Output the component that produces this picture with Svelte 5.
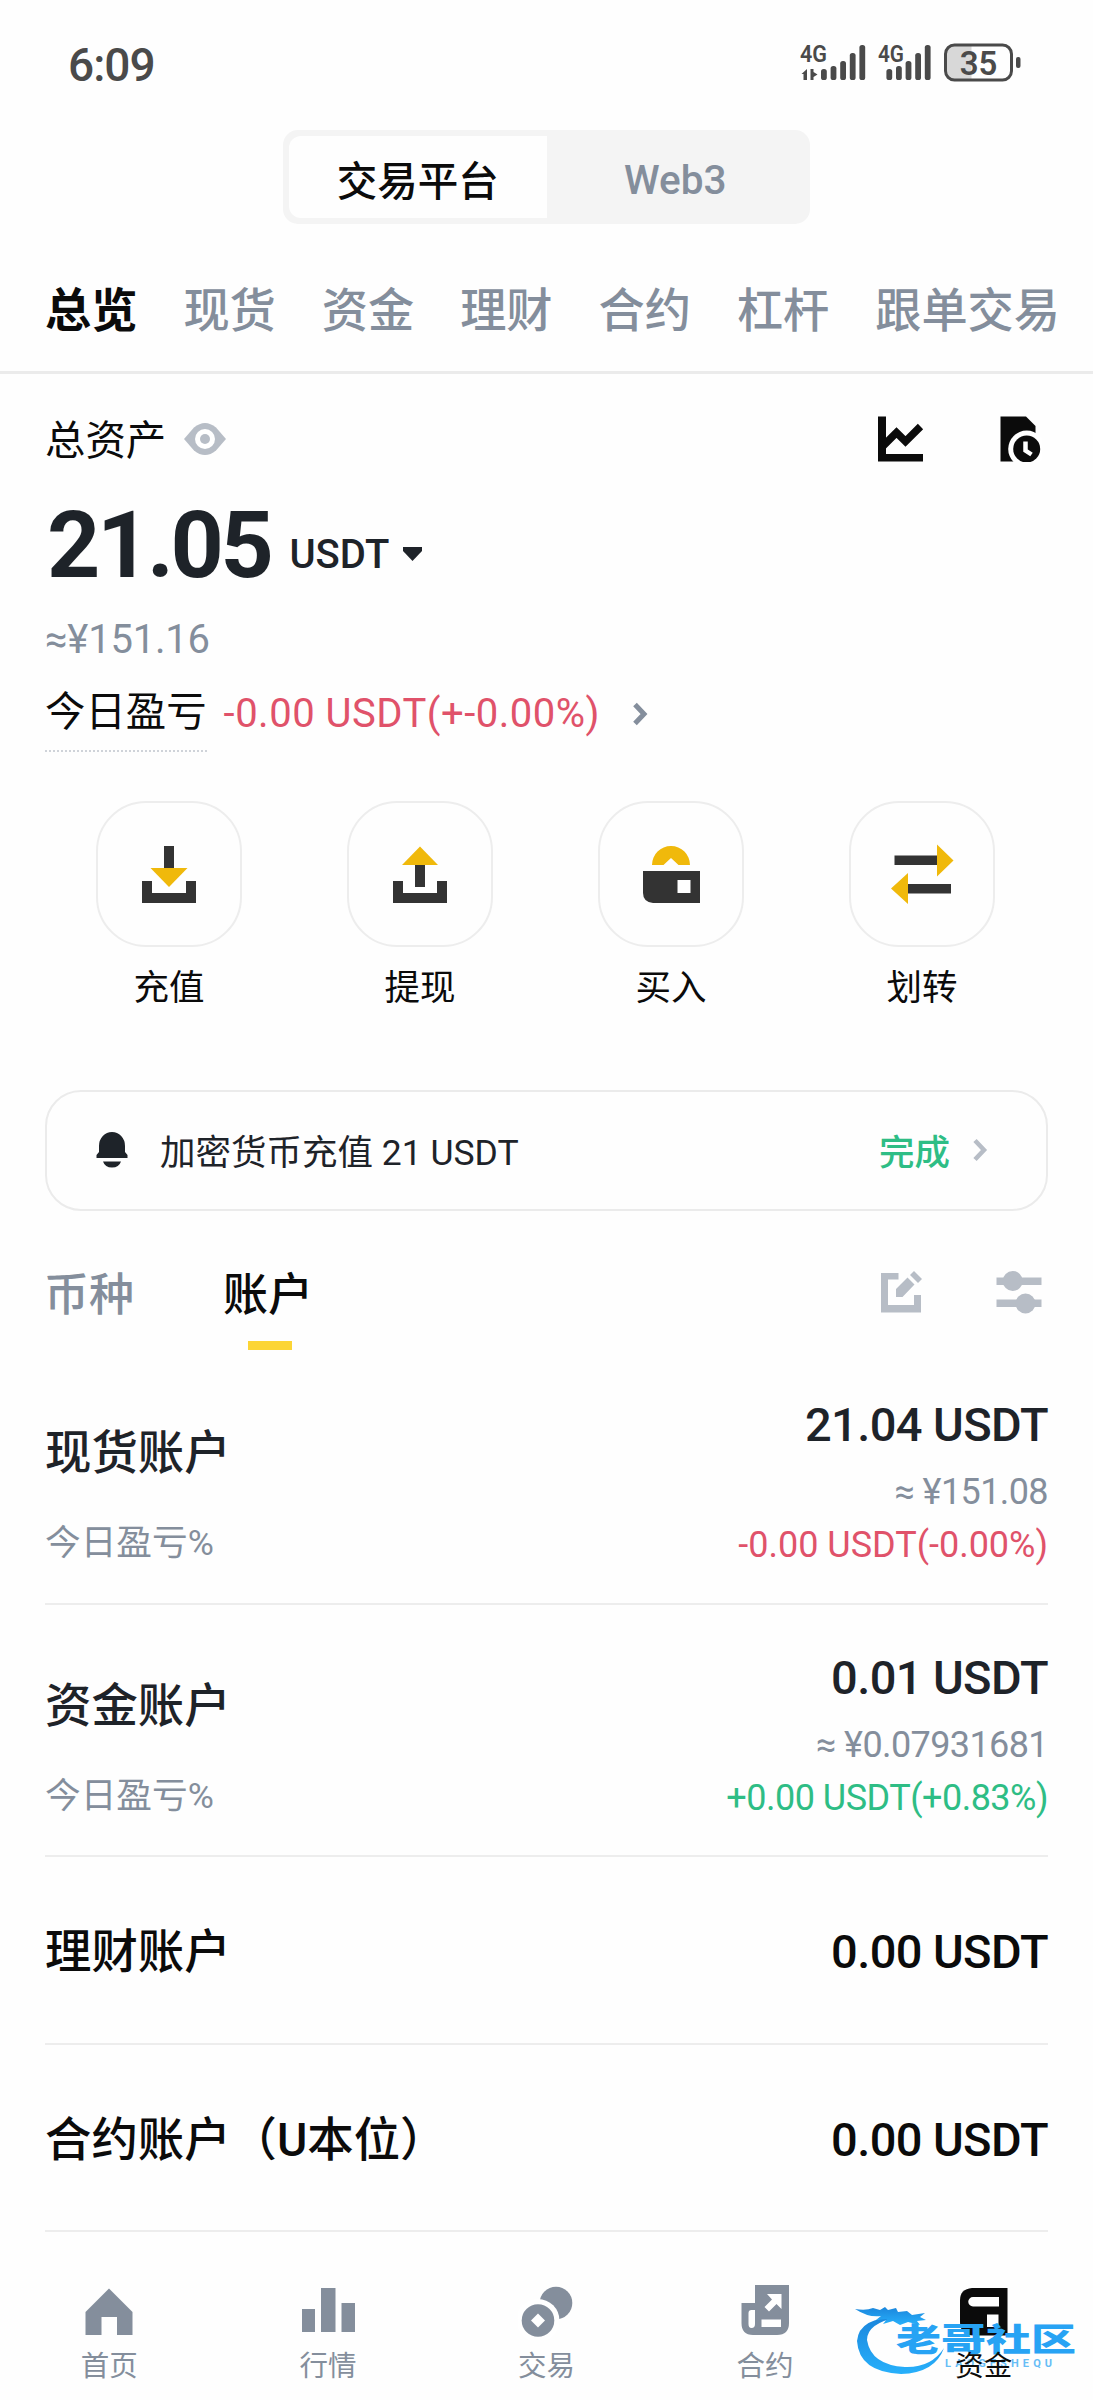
<script>
  let activeTab = $state('总览');
  let activeList = $state('账户');
  let activeNav = $state('资金');

  const tabs = ['总览', '现货', '资金', '理财', '合约', '杠杆', '跟单交易'];

  const actions = [
    { id: 'deposit', label: '充值' },
    { id: 'withdraw', label: '提现' },
    { id: 'buy', label: '买入' },
    { id: 'transfer', label: '划转' },
  ];

  const accounts = [
    { name: '现货账户', amount: '21.04 USDT', fiat: '≈ ¥151.08', pnl: '-0.00 USDT(-0.00%)', trend: 'down' },
    { name: '资金账户', amount: '0.01 USDT', fiat: '≈ ¥0.07931681', pnl: '+0.00 USDT(+0.83%)', trend: 'up' },
    { name: '理财账户', amount: '0.00 USDT' },
    { name: '合约账户（U本位）', amount: '0.00 USDT' },
  ];

  const navItems = [
    { id: 'home', label: '首页' },
    { id: 'markets', label: '行情' },
    { id: 'trade', label: '交易' },
    { id: 'futures', label: '合约' },
    { id: 'wallet', label: '资金' },
  ];

  // [x, top] of each signal bar
  const bars = [[0, 24], [9.6, 21], [19.2, 16], [28.8, 8], [38.4, 0]];
</script>

<div class="app">
  <div class="status-bar">
    <span class="clock">6:09</span>
    <svg class="status-icons" width="222" height="44" viewBox="800 40 222 44">
      <g fill="#4a4a4a">
        <text x="800" y="62" font-size="24" textLength="27" lengthAdjust="spacingAndGlyphs">4G</text>
        <text x="878" y="62" font-size="24" textLength="26" lengthAdjust="spacingAndGlyphs">4G</text>
        <path d="M807 69v11h-3.500v-6h-2zM810.500 69v11h3v-3l4-2.500-4-2.500v-3z" />
        {#each bars as [x, top]}
          <rect x={821 + x} y={45 + top} width="5.8" height={35 - top} rx="2.6" />
          <rect x={886.4 + x} y={45 + top} width="5.8" height={35 - top} rx="2.6" />
        {/each}
        <rect x="1016" y="57" width="4.5" height="11" rx="2" />
      </g>
      <path d="M954 45h17.500v35h-17.500q-8 0-8-8v-19q0-8 8-8z" fill="#d8d8d8" />
      <rect x="945.500" y="45" width="66" height="35" rx="9" fill="none" stroke="#4a4a4a" stroke-width="3" />
      <text class="battery" x="978.500" y="75" font-size="33" text-anchor="middle" fill="#4a4a4a">35</text>
    </svg>
  </div>

  <div class="switch">
    <button class="switch-item on">交易平台</button>
    <button class="switch-item">Web3</button>
  </div>

  <nav class="tabs">
    {#each tabs as tab}
      <button class="tab" class:active={activeTab === tab} onclick={() => (activeTab = tab)}>{tab}</button>
    {/each}
  </nav>

  <section class="summary">
    <div class="summary-head">
      <span class="total-label">总资产</span>
      <svg class="eye" width="44" height="34" viewBox="0 0 44 34">
        <path d="M1 17L11 5.500Q22-3.500 33 5.500L43 17 33 28.500Q22 37.500 11 28.500z" fill="#b7bdc6" />
        <circle cx="22" cy="17" r="10" fill="#fff" />
        <circle cx="22" cy="17" r="5" fill="#b7bdc6" />
      </svg>
      <span class="spacer"></span>
      <svg width="46" height="46" viewBox="878 416 46 46">
        <path d="M878 416.500h8v37.500h37v7.500h-45z" fill="#0b0b0b" />
        <path d="M883 446l13.500-13.500 9 9 15-15" fill="none" stroke="#0b0b0b" stroke-width="7.500" />
      </svg>
      <svg class="history" width="42" height="46" viewBox="1000 416 42 46">
        <path d="M1000.500 416.500h25.500l9.500 9.500v35.500h-35z" fill="#0b0b0b" />
        <circle cx="1026.700" cy="449" r="18.500" fill="#fff" />
        <circle cx="1026.700" cy="449" r="13.500" fill="#0b0b0b" />
        <path d="M1025.500 441.500v9l6 4" fill="none" stroke="#fff" stroke-width="4.500" />
      </svg>
    </div>

    <div class="balance">
      <span class="balance-value">21.05</span>
      <span class="balance-unit">USDT</span>
      <svg width="20" height="14" viewBox="0 0 20 14"><path d="M0 0h19v4l-9.500 10L0 4z" fill="#1e2329" /></svg>
    </div>

    <div class="fiat">≈¥151.16</div>

    <div class="pnl">
      <span class="pnl-label">今日盈亏</span>
      <span class="pnl-value">-0.00 USDT(+-0.00%)</span>
      <svg width="16" height="24" viewBox="0 0 16 24"><path d="M3 2.500l9 9.500-9 9.500" fill="none" stroke="#848e9c" stroke-width="5" /></svg>
    </div>
  </section>

  <section class="actions">
    {#each actions as { id, label }}
      <button class="action">
        <span class="action-box">
          <svg width="64" height="64" viewBox="0 0 64 64">
            {#if id === 'deposit'}
              <path d="M27 4h10v22H27zM5 39h10v12h34V39h10v22H5z" fill="#333" />
              <path d="M13.500 26h37L32 45z" fill="#f0b90b" />
            {:else if id === 'withdraw'}
              <path d="M27 22h10v23H27zM5 39h10v12h34V39h10v22H5z" fill="#333" />
              <path d="M14 23h36L32 4.500z" fill="#f0b90b" />
            {:else if id === 'buy'}
              <path d="M4 29h57v32H14Q4 60 4 51z" fill="#333" />
              <path d="M38.500 38h13v13h-13z" fill="#fff" />
              <path d="M13 23a19 19 0 0 1 38 0H39.500L32 16l-7.500 7z" fill="#f0b90b" />
            {:else}
              <path d="M4.500 13.500H48v9.500H4.500zM17 42h44v9.500H17z" fill="#333" />
              <path d="M47 2.500v32l16.500-16zM18 31v31L1 46.500z" fill="#f0b90b" />
            {/if}
          </svg>
        </span>
        <span class="action-label">{label}</span>
      </button>
    {/each}
  </section>

  <div class="notice">
    <svg width="32" height="36" viewBox="0 0 32 36">
      <path d="M3 20V14a13 14 0 0 1 26 0v6l2.500 3v3H.5v-3zM7 29.500h18q-2 6-9 6t-9-6z" fill="#1e2329" />
    </svg>
    <span class="notice-text">加密货币充值 21 USDT</span>
    <span class="notice-state">完成</span>
    <svg class="notice-arrow" width="16" height="24" viewBox="0 0 16 24"><path d="M3 2.500l9 9.500-9 9.500" fill="none" stroke="#b7bdc6" stroke-width="4.500" /></svg>
  </div>

  <div class="list-head">
    {#each ['币种', '账户'] as item}
      <button class="list-tab" class:active={activeList === item} onclick={() => (activeList = item)}>{item}</button>
    {/each}
    <span class="spacer"></span>
    <svg width="44" height="42" viewBox="880 1272 44 42" fill="#b7bdc6">
      <path d="M881 1274h17.500v6.500H888v25.500h26v-10h7v17.500h-40z" />
      <path d="M896 1298v-8l11.500-11.500 7 7-12 12.500zM910 1276l4-4 8 8-4 4z" />
    </svg>
    <svg class="sliders" width="46" height="44" viewBox="996 1271 46 44" fill="#b7bdc6">
      <path d="M996.500 1278.500h45v7.500h-45zM996.500 1300.500h45v7.500h-45z" />
      <circle cx="1012.700" cy="1282" r="10" />
      <circle cx="1025.500" cy="1304.500" r="10" />
    </svg>
  </div>

  <section class="accounts">
    {#each accounts as account}
      <div class="account" class:detailed={account.pnl}>
        <div class="account-left">
          <span class="account-name">{account.name}</span>
          {#if account.pnl}<span class="account-sub">今日盈亏%</span>{/if}
        </div>
        <div class="account-right">
          <span class="account-amount">{account.amount}</span>
          {#if account.pnl}
            <span class="account-fiat">{account.fiat}</span>
            <span class="account-pnl {account.trend}">{account.pnl}</span>
          {/if}
        </div>
      </div>
    {/each}
  </section>

  <nav class="bottom-nav">
    {#each navItems as { id, label }}
      <button class="nav-item" class:active={activeNav === label} onclick={() => (activeNav = label)}>
        <svg width="56" height="56" viewBox="0 0 56 56" fill="currentColor">
          {#if id === 'home'}
            <path d="M28 4.500L51.500 28v23H36V33H20.500v18h-16V28z" />
          {:else if id === 'markets'}
            <path d="M2 25h13v23H2zM21 4h14.500v44H21zM41.500 19H55v29H41.500z" />
          {:else if id === 'trade'}
            <circle cx="38" cy="19" r="16.300" />
            <circle cx="20" cy="36.500" r="21.500" fill="#fff" />
            <circle cx="20" cy="36.500" r="16.300" />
            <path d="M20 29.500l7 7-7 7-7-7z" fill="#fff" />
          {:else if id === 'futures'}
            <path d="M18 1h34v38q0 12-12 12H16Q4.500 51 4.500 39V19H18z" />
            <path d="M30 10h14.500v15l-5-5L32 27.500l-4.500-4.500L35 15.500zM11.500 29q0-3 3-3H18v14q0 4-3.500 4-3 0-3-4zM24.500 35.500H44V43H24.500z" fill="#fff" />
          {:else}
            <path d="M16 4h35.500v47.500H18Q4 51 4 38V16Q4 5 16 4z" />
            <path d="M43 13v9.500H17a4.750 4.750 0 0 1 0-9.500zM31 30.500h11.500V43H31z" fill="#fff" />
          {/if}
        </svg>
        <span class="nav-label">{label}</span>
      </button>
    {/each}

    <div class="watermark">
      <svg width="110" height="80" viewBox="8 26 110 80">
        <defs>
          <linearGradient id="dragon" x1="0" y1="0" x2="0" y2="1">
            <stop offset="0" stop-color="#1b86dc" />
            <stop offset="1" stop-color="#27b0fb" />
          </linearGradient>
        </defs>
        <g fill="url(#dragon)">
          <path d="M54 42Q14 42 12 66 14 97 56 99 90 98 99 73 86 93 60 92 26 90 22 65 22 48 54 42z" />
          <path d="M10 34q11 2 18-1l7 2 5-3 3 3 8-2 2 4 9-1 5 4 13-2-5 4 6 3-9 1 3 4-12-3-8 3-7-4-10 3 4-5-11 1 5-4q-12 2-26-7z" />
        </g>
      </svg>
      <span class="watermark-name">老哥社区</span>
      <span class="watermark-sub">LAOGESHEQU</span>
    </div>
  </nav>
</div>

<style>
  :global(body) {
    background: #fefefe;
  }

  .app {
    width: 1093px;
    height: 2400px;
    overflow: hidden;
    display: flex;
    flex-direction: column;
    background: #fefefe;
    color: #0b0b0b;
    font-family: Roboto, 'Noto Sans CJK SC', sans-serif;
  }

  button {
    padding: 0;
    border: none;
    background: none;
    color: inherit;
    font: inherit;
    cursor: pointer;
    white-space: nowrap;
  }

  svg {
    display: block;
    flex: none;
  }

  .spacer {
    flex: 1;
  }

  .status-bar {
    height: 130px;
    box-sizing: border-box;
    padding: 40px 71px 0 68px;
    display: flex;
    align-items: flex-start;
    justify-content: space-between;
  }

  .clock {
    font-size: 46px;
    line-height: 50px;
    font-weight: 500;
    letter-spacing: -1px;
    color: #4a4a4a;
  }

  .status-icons {
    font-weight: 600;
  }

  .switch {
    width: 527px;
    height: 94px;
    box-sizing: border-box;
    padding: 6px;
    margin: 0 auto;
    display: flex;
    border-radius: 15px;
    background: #f4f4f4;
  }

  .switch-item {
    flex: 1;
    padding-top: 6px;
    font-size: 40.5px;
    font-weight: 500;
    color: #848e9c;
  }

  .switch-item.on {
    padding-top: 2px;
    border-radius: 12px 0 0 12px;
    background: #fefefe;
    color: #0b0b0b;
  }

  .tabs {
    height: 150px;
    display: flex;
    align-items: center;
    gap: 46px;
    padding: 26px 0 0 45px;
    box-sizing: border-box;
    border-bottom: 3px solid #ebebeb;
    flex: none;
  }

  .tab {
    height: 72px;
    font-size: 46.2px;
    line-height: 72px;
    font-weight: 500;
    color: #848e9c;
  }

  .tab.active {
    color: #0b0b0b;
    font-weight: 700;
  }

  .summary {
    height: 427px;
    flex: none;
    padding: 0 45px;
    box-sizing: border-box;
  }

  .summary-head {
    display: flex;
    align-items: center;
    height: 60px;
    padding-top: 35px;
    padding-right: 6px;
  }

  .total-label {
    padding-top: 6px;
    font-size: 40.4px;
    line-height: 54px;
  }

  .eye {
    margin-left: 17px;
  }

  .history {
    margin-left: 76px;
  }

  .balance {
    display: flex;
    align-items: center;
    height: 108px;
    margin-top: 21px;
    color: #1e2329;
  }

  .balance-value {
    margin-left: 2px;
    padding-top: 4px;
    font-size: 93px;
    line-height: 108px;
    font-weight: 700;
    letter-spacing: -3.4px;
  }

  .balance-unit {
    margin-left: 19px;
    margin-right: 14px;
    padding-top: 22px;
    font-size: 40px;
    line-height: 48px;
    font-weight: 500;
  }

  .balance svg {
    margin-top: 20px;
  }

  .fiat {
    margin-top: 14px;
    font-size: 40px;
    line-height: 56px;
    letter-spacing: -0.2px;
    color: #848e9c;
  }

  .pnl {
    display: flex;
    align-items: center;
    margin-top: 8px;
  }

  .pnl-label {
    font-size: 40.4px;
    line-height: 74px;
    border-bottom: 2px dotted #cfd3d9;
  }

  .pnl-value {
    margin-left: 17px;
    margin-right: 32px;
    font-size: 40px;
    line-height: 76px;
    letter-spacing: 0.5px;
    color: #e0526a;
  }

  .actions {
    display: flex;
    gap: 105px;
    padding-left: 96px;
    height: 289px;
    flex: none;
  }

  .action {
    width: 146px;
    display: flex;
    flex-direction: column;
    align-items: center;
  }

  .action-box {
    width: 146px;
    height: 146px;
    box-sizing: border-box;
    display: flex;
    align-items: center;
    justify-content: center;
    border: 2px solid #ededed;
    border-radius: 50px;
  }

  .action-label {
    margin-top: 15px;
    font-size: 35.5px;
    line-height: 52px;
  }

  .notice {
    height: 121px;
    flex: none;
    box-sizing: border-box;
    margin: 0 45px;
    padding: 0 58px 2px 49px;
    display: flex;
    align-items: center;
    border: 2px solid #ebebeb;
    border-radius: 36px;
    font-size: 35.5px;
  }

  .notice-text {
    flex: 1;
    margin-left: 32px;
    color: #1e2329;
  }

  .notice-state {
    color: #2ebd85;
    font-weight: 500;
  }

  .notice-arrow {
    margin-left: 22px;
  }

  .list-head {
    display: flex;
    align-items: center;
    height: 141px;
    flex: none;
    padding: 20px 51px 0 44px;
    box-sizing: border-box;
  }

  .list-tab {
    position: relative;
    margin-right: 89px;
    height: 117px;
    font-size: 45px;
    font-weight: 500;
    color: #848e9c;
  }

  .list-tab.active {
    color: #0b0b0b;
  }

  .list-tab.active::after {
    content: '';
    position: absolute;
    left: 25px;
    bottom: 0;
    width: 44px;
    height: 9px;
    background: #fcd535;
  }

  .sliders {
    margin-left: 72px;
  }

  .accounts {
    padding: 0 45px;
    flex: none;
  }

  .account {
    height: 187.500px;
    box-sizing: border-box;
    display: flex;
    align-items: center;
    justify-content: space-between;
    padding-top: 5px;
    border-bottom: 2px solid #ededed;
  }

  .account.detailed {
    height: 252.500px;
    align-items: flex-start;
    padding-top: 0;
    color: #1e2329;
  }

  .account-left,
  .account-right {
    display: flex;
    flex-direction: column;
  }

  .account-right {
    align-items: flex-end;
  }

  .detailed .account-left {
    padding-top: 68px;
  }

  .detailed .account-right {
    padding-top: 43px;
  }

  .account-name {
    font-size: 46.4px;
    line-height: 66px;
    font-weight: 500;
  }

  .account-sub {
    margin-top: 31px;
    font-size: 35.7px;
    line-height: 52px;
    color: #848e9c;
  }

  .account-amount {
    font-size: 47px;
    line-height: 60px;
    font-weight: 500;
    letter-spacing: -0.6px;
  }

  .account-fiat {
    margin-top: 11px;
    font-size: 36px;
    line-height: 52px;
    letter-spacing: -0.6px;
    color: #848e9c;
  }

  .account-pnl {
    font-size: 36px;
    line-height: 54px;
  }

  .down {
    color: #e0526a;
  }

  .up {
    letter-spacing: -0.5px;
    color: #2ebd85;
  }

  .bottom-nav {
    position: relative;
    flex: 1;
    display: grid;
    grid-template-columns: repeat(5, 1fr);
    padding-top: 52px;
  }

  .nav-item {
    display: flex;
    flex-direction: column;
    align-items: center;
    color: #848e9c;
  }

  .nav-item.active {
    color: #0b0b0b;
  }

  .nav-label {
    position: relative;
    z-index: 2;
    margin-top: 6px;
    font-size: 28.5px;
    line-height: 42px;
  }

  .watermark {
    position: absolute;
    z-index: 1;
    right: 0;
    bottom: 0;
    width: 240px;
    height: 99px;
    color: #27a3f4;
  }

  .watermark-name {
    position: absolute;
    left: 43px;
    top: 6px;
    font-size: 45px;
    line-height: 66px;
    font-weight: 900;
    white-space: nowrap;
    transform: scaleY(0.72);
  }

  .watermark-sub {
    position: absolute;
    left: 92px;
    top: 56px;
    font-size: 11px;
    line-height: 14px;
    font-weight: 700;
    letter-spacing: 4.1px;
    opacity: 0.7;
  }
</style>
